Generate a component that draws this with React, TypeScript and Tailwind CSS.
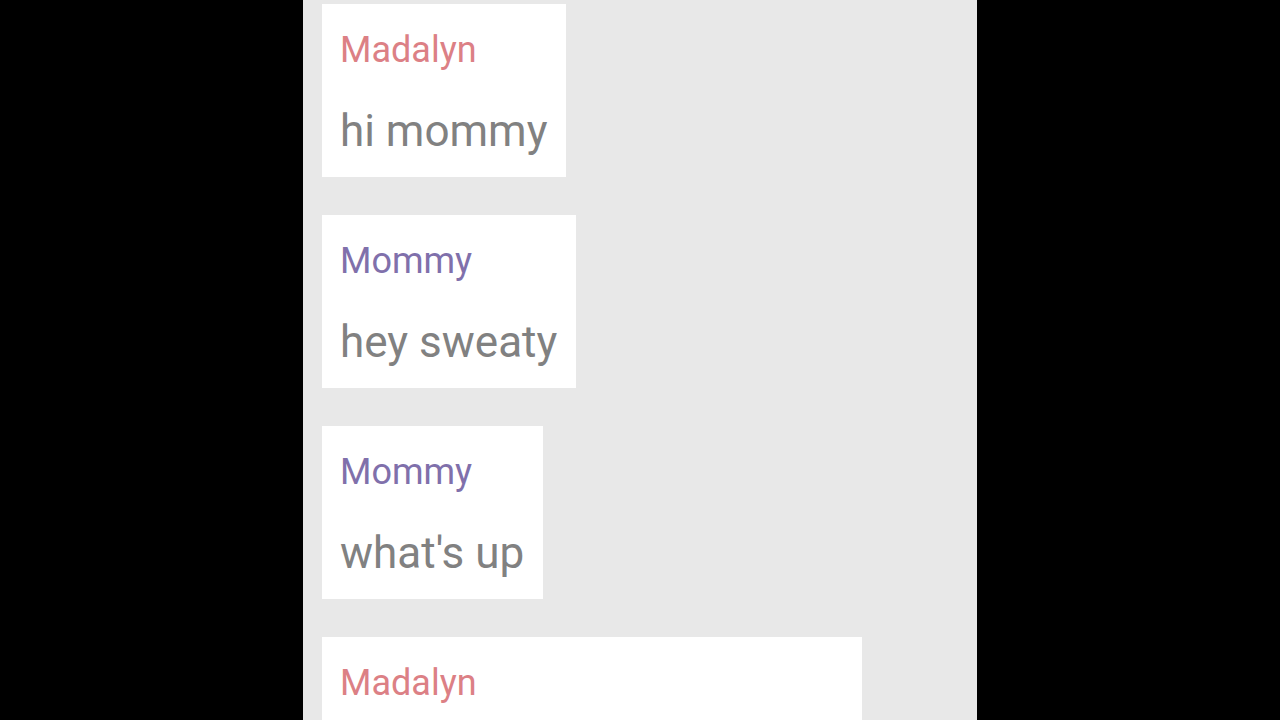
import React from "react";

type Msg = { name: string; text?: string; who: "m" | "d"; w: string };

const msgs: Msg[] = [
  { name: "Madalyn", text: "hi mommy", who: "d", w: "w-[244px]" },
  { name: "Mommy", text: "hey sweaty", who: "m", w: "w-[254px]" },
  { name: "Mommy", text: "what's up", who: "m", w: "w-[221px]" },
  { name: "Madalyn", who: "d", w: "w-[540px]" },
];

export default function App() {
  return (
    <div className="w-screen h-screen bg-black overflow-hidden flex justify-center" style={{ fontFamily: "Roboto, 'Noto Sans', sans-serif" }}>
      <div className="w-[674px] h-full bg-[#e8e8e8] pt-[4px] pl-[19px] flex flex-col gap-[38px] overflow-hidden">
        {msgs.map((m, i) => (
          <div key={i} className={`${m.w} h-[173px] shrink-0 bg-white pl-[18px] pt-[28px] flex flex-col`}>
            <div className={`${m.who === "d" ? "text-[#dc8085]" : "text-[#8070ab]"} text-[36px] leading-[36px] h-[36px] whitespace-nowrap`}>
              {m.name}
            </div>
            {m.text && (
              <div className="mt-[41px] text-[#818181] text-[44px] leading-[44px] h-[44px] whitespace-nowrap">
                {m.text}
              </div>
            )}
          </div>
        ))}
      </div>
    </div>
  );
}
